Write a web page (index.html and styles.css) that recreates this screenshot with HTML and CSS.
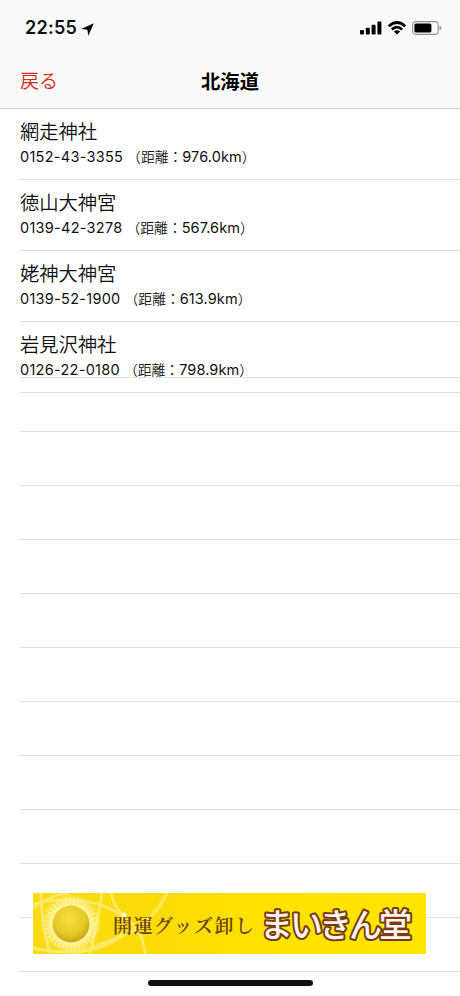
FILE: index.html
```html
<!DOCTYPE html>
<html lang="ja">
<head>
  <meta charset="UTF-8">
  <meta name="viewport" content="width=device-width, initial-scale=1">
  <title>北海道</title>
  <link rel="stylesheet" href="styles.css">
</head>
<body>
  <div class="screen">
    <header class="header">
      <div class="status-bar">
        <span class="time">22:55</span>
        <svg class="location" viewBox="0 0 13 13"><path d="M12.8 0.2 0.2 5.9 6.4 6.7 7.3 12.8Z"/></svg>
        <div class="status-icons">
          <svg width="22" height="14" viewBox="0 0 22 14">
            <rect x="0" y="9" width="4" height="4.6" rx="1"/>
            <rect x="5.8" y="6.8" width="4" height="6.8" rx="1"/>
            <rect x="11.6" y="3.8" width="4" height="9.8" rx="1"/>
            <rect x="17.4" y="0.4" width="4" height="13.2" rx="1"/>
          </svg>
          <svg width="18" height="14" viewBox="0 0 18 14">
            <path class="wave" d="M0.8 5.3Q9-2.3 17.2 5.3M3.8 8.6Q9 3.8 14.2 8.6"/>
            <path d="M9 13.5 5.9 10.6Q9 8 12.1 10.6Z"/>
          </svg>
          <svg width="30" height="14" viewBox="0 0 30 14">
            <rect class="battery-case" x="0.6" y="0.6" width="25.6" height="12.8" rx="3.4"/>
            <rect x="2.4" y="2.4" width="17" height="9.2" rx="1.6"/>
            <path class="battery-tip" d="M27.5 4.7Q29.6 5.6 29.6 7T27.5 9.3Z"/>
          </svg>
        </div>
      </div>
      <nav class="nav-bar">
        <a class="back" href="#">戻る</a>
        <h1 class="title">北海道</h1>
      </nav>
    </header>

    <main class="table">
      <div class="empty-rows">
        <div></div><div></div><div></div><div></div>
        <div></div><div></div><div></div><div></div>
        <div></div><div></div><div></div><div></div>
      </div>
      <ul class="shrines">
        <li>
          <h2>網走神社</h2>
          <p><span class="tel">0152-43-3355</span><span class="distance">（距離：<b>976.0km</b>）</span></p>
        </li>
        <li>
          <h2>徳山大神宮</h2>
          <p><span class="tel">0139-42-3278</span><span class="distance">（距離：<b>567.6km</b>）</span></p>
        </li>
        <li>
          <h2>姥神大神宮</h2>
          <p><span class="tel">0139-52-1900</span><span class="distance">（距離：<b>613.9km</b>）</span></p>
        </li>
        <li>
          <h2>岩見沢神社</h2>
          <p><span class="tel">0126-22-0180</span><span class="distance">（距離：<b>798.9km</b>）</span></p>
        </li>
      </ul>
    </main>

    <a class="banner" href="#">
      <svg width="393" height="61" viewBox="0 0 393 61">
        <defs>
          <linearGradient id="gold" x1="0" x2="1">
            <stop offset="0" stop-color="#fadb12"/>
            <stop offset="0.3" stop-color="#fbdb08"/>
            <stop offset="0.6" stop-color="#ffe200"/>
            <stop offset="1" stop-color="#ffe500"/>
          </linearGradient>
          <radialGradient id="ball" cx="0.45" cy="0.35" r="0.7">
            <stop offset="0" stop-color="#f5e03c"/>
            <stop offset="0.6" stop-color="#e6ca28"/>
            <stop offset="1" stop-color="#c09d16"/>
          </radialGradient>
          <radialGradient id="glow">
            <stop offset="0.6" stop-color="#fff7ac"/>
            <stop offset="0.72" stop-color="#fff08a" stop-opacity="0.75"/>
            <stop offset="1" stop-color="#ffec70" stop-opacity="0"/>
          </radialGradient>
        </defs>
        <rect width="393" height="61" fill="url(#gold)"/>
        <g class="rings">
          <ellipse cx="33" cy="33" rx="59" ry="26"/>
          <path d="M8 0Q9 40 18 61M69 0Q64 33 57 61M0 15Q22 0 36 0M78 0Q82 18 96 28T112 61M134 0Q119 31 91 42T42 61"/>
        </g>
        <circle cx="38" cy="31" r="31" fill="url(#glow)"/>
        <circle class="rays" cx="38" cy="31" r="23.5"/>
        <circle cx="38" cy="31" r="18.5" fill="url(#ball)"/>
        <circle cx="91" cy="22" r="2.5" fill="#fffbd0"/>
        <text class="tagline" x="80" y="39.5" textLength="141">開運グッズ卸し</text>
        <text class="shop" x="227 257 286 316 346" y="44">まいきん堂</text>
      </svg>
    </a>
    <div class="home-indicator"></div>
  </div>
</body>
</html>
```
FILE: styles.css
```css
* {
  margin: 0;
  padding: 0;
  box-sizing: border-box;
}

body {
  font-family: Inter, "Noto Sans CJK JP", sans-serif;
  background: #fff;
  color: #111;
}

.screen {
  position: relative;
  width: 460px;
  height: 996px;
  overflow: hidden;
}

.header {
  height: 109px;
  background: #f9f9f9;
  border-bottom: 1px solid #d3d3d4;
}

.status-bar {
  display: flex;
  align-items: center;
  height: 56px;
  padding: 0 18px 0 25px;
}

.time {
  font-size: 18px;
  font-weight: 600;
  line-height: 20px;
  letter-spacing: 0.25px;
}

.location {
  width: 13px;
  height: 13px;
  margin: 2px 0 0 4px;
}

.status-icons {
  display: flex;
  gap: 6px;
  margin-left: auto;
}

.wave {
  fill: none;
  stroke: #000;
  stroke-width: 2.7;
}

.battery-case {
  fill: none;
  stroke: #929292;
  stroke-width: 1.1;
}

.battery-tip {
  fill: #929292;
}

.nav-bar {
  display: grid;
  grid-template-columns: 1fr auto 1fr;
  align-items: center;
  height: 50px;
  padding: 0 20px;
}

.back {
  color: #d52c1e;
  font-size: 19px;
  font-weight: 350;
  line-height: 26px;
  padding-top: 2px;
  text-decoration: none;
}

.title {
  font-size: 19.3px;
  font-weight: 700;
  color: #000;
}

.table {
  display: grid;
}

.empty-rows,
.shrines {
  grid-area: 1 / 1;
  padding-left: 20px;
}

.empty-rows div {
  height: 54px;
  border-bottom: 1px solid #e3e3e4;
}

.empty-rows div:first-child {
  height: 269px;
}

.shrines {
  list-style: none;
}

.shrines li {
  height: 71px;
  padding-top: 9px;
  border-bottom: 1px solid #e0e0e1;
}

.shrines h2 {
  font-family: "Noto Sans CJK JP", sans-serif;
  font-size: 19.3px;
  font-weight: 350;
  line-height: 27px;
}

.shrines p {
  display: flex;
  align-items: baseline;
  gap: 4px;
  line-height: 22px;
}

.tel,
.distance b {
  font-size: 14.5px;
  font-weight: 400;
  letter-spacing: 0.28px;
}

.distance {
  font-family: "Noto Sans CJK JP", sans-serif;
  font-size: 13.8px;
  font-weight: 350;
}

.distance b {
  font-family: Inter, sans-serif;
  letter-spacing: 0.1px;
}

.banner {
  position: absolute;
  left: 33px;
  top: 893px;
  height: 61px;
}

.banner svg {
  display: block;
}

.rings {
  fill: none;
  stroke: #fff192;
  stroke-width: 3;
  opacity: 0.65;
}

.rays {
  fill: none;
  stroke: #fffbd0;
  stroke-width: 7;
  stroke-dasharray: 1.5 2.5;
  opacity: 0.5;
}

.tagline {
  font-family: "Noto Serif CJK JP", "Noto Sans CJK JP", serif;
  font-size: 19px;
  font-weight: 600;
  fill: #69400a;
}

.shop {
  font-family: "Noto Sans CJK JP", sans-serif;
  font-size: 33px;
  font-weight: 500;
  fill: #fff5ec;
  stroke: #753c16;
  stroke-width: 4;
  stroke-linejoin: round;
  paint-order: stroke;
}

.home-indicator {
  position: absolute;
  left: 148px;
  bottom: 10px;
  width: 165px;
  height: 6px;
  border-radius: 3px;
  background: #111;
}
```
